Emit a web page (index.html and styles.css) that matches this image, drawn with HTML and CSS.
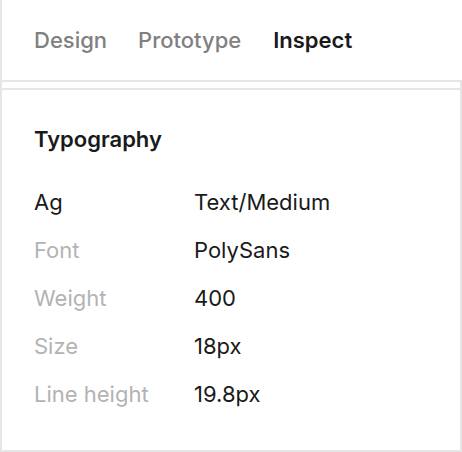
FILE: index.html
```html
<!DOCTYPE html>
<html>
<head>
<meta charset="utf-8">
<link rel="stylesheet" href="styles.css">
</head>
<body>
<div class="panel">
  <div class="tabs">
    <span class="tab">Design</span>
    <span class="tab">Prototype</span>
    <span class="tab active">Inspect</span>
  </div>
  <div class="body">
    <div class="inner">
      <h2 class="title">Typography</h2>
      <div class="rows">
        <div class="row"><span class="label strong">Ag</span><span class="value">Text/Medium</span></div>
        <div class="row"><span class="label">Font</span><span class="value">PolySans</span></div>
        <div class="row"><span class="label">Weight</span><span class="value">400</span></div>
        <div class="row"><span class="label">Size</span><span class="value">18px</span></div>
        <div class="row"><span class="label">Line height</span><span class="value">19.8px</span></div>
      </div>
    </div>
  </div>
</div>
</body>
</html>
```

FILE: styles.css
```css
* { box-sizing: border-box; margin: 0; padding: 0; }
html, body { width: 462px; height: 452px; background: #fff; }
body { font-family: Inter, "Noto Sans", sans-serif; color: #1a1a1a; }
.panel {
  width: 462px;
  height: 452px;
  border-left: 2px solid #e6e6e6;
  display: flex;
  flex-direction: column;
}
.tabs {
  height: 82px;
  border-bottom: 2px solid #e6e6e6;
  display: flex;
  align-items: center;
  gap: 32px;
  padding-left: 32px;
}
.tab {
  font-size: 22px;
  font-weight: 500;
  color: #808080;
  line-height: 26px;
}
.tab:first-child { margin-right: -1px; }
.tab.active { color: #1a1a1a; font-weight: 600; }
.body {
  flex: 1;
  border-right: 2px solid #e6e6e6;
  border-bottom: 2px solid #e6e6e6;
  padding-top: 6px;
  display: flex;
}
.inner {
  flex: 1;
  border-top: 2px solid #e6e6e6;
  padding: 36px 0 0 32px;
}
.title {
  font-size: 22px;
  font-weight: 600;
  line-height: 26px;
  color: #1a1a1a;
}
.rows { margin-top: 37px; display: flex; flex-direction: column; gap: 22px; }
.row { display: flex; line-height: 26px; font-size: 22px; }
.label { width: 160px; color: #b3b3b3; }
.label.strong { color: #1a1a1a; }
.value { color: #1a1a1a; }
```
